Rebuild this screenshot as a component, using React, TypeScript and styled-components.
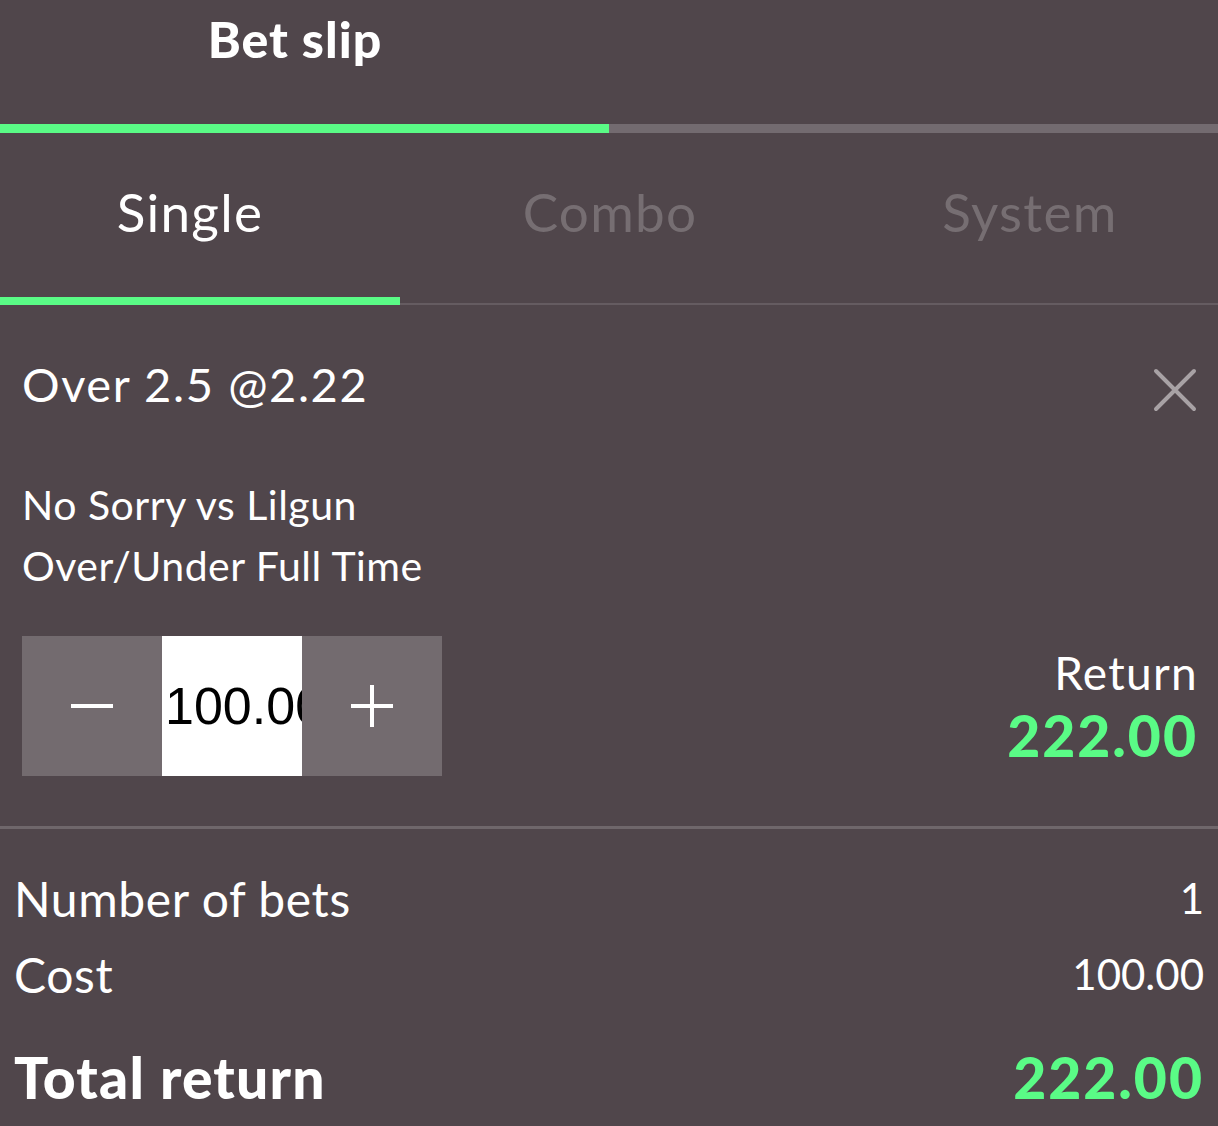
import React from 'react';
import styled, { createGlobalStyle } from 'styled-components';

const GlobalStyle = createGlobalStyle`
  html, body {
    margin: 0;
    padding: 0;
    background: #50464b;
  }
  body {
    font-family: Lato, "Open Sans", sans-serif;
    color: #ffffff;
  }
`;

const Page = styled.div`
  width: 1218px;
  height: 1126px;
  overflow: hidden;
  background: #50464b;
`;

const Header = styled.div`
  height: 124px;
  display: flex;
`;

const HeaderTitle = styled.div`
  width: 590px;
  text-align: center;
  font-weight: 900;
  font-size: 50px;
  line-height: 1;
  padding-top: 14px;
  letter-spacing: 1px;
`;

const Track = styled.div`
  height: 9px;
  background: #736b70;
`;

const TrackFill = styled.div`
  height: 100%;
  background: #5afb86;
`;

const TabsBar = styled.div`
  height: 172px;
  border-bottom: 2px solid #655c61;
  box-sizing: border-box;
`;

const Tabs = styled.div`
  display: grid;
  grid-template-columns: repeat(3, 420px);
  height: 100%;
  margin-left: -20px;
`;

const Tab = styled.div<{ $active?: boolean }>`
  display: flex;
  align-items: center;
  justify-content: center;
  padding-bottom: 14px;
  font-size: 53px;
  letter-spacing: 1.3px;
  color: ${({ $active }) => ($active ? '#ffffff' : '#766e72')};
  position: relative;
  &::after {
    content: '';
    display: ${({ $active }) => ($active ? 'block' : 'none')};
    position: absolute;
    left: 0;
    right: 0;
    bottom: -2px;
    height: 8px;
    background: #5afb86;
  }
`;

const Bet = styled.div`
  padding: 49px 20px 50px 22px;
  border-bottom: 3px solid #6f676b;
`;

const BetHead = styled.div`
  display: flex;
  justify-content: space-between;
  align-items: flex-start;
  height: 60px;
`;

const Selection = styled.div`
  font-size: 47px;
  line-height: 60px;
  letter-spacing: 1.6px;
`;

const Close = styled.button`
  border: none;
  background: none;
  padding: 0;
  width: 46px;
  height: 46px;
  margin-top: 13px;
  cursor: pointer;
`;

const Meta = styled.div`
  margin-top: 60px;
  font-size: 41px;
  line-height: 61px;
  letter-spacing: 0.5px;
`;

const StakeRow = styled.div`
  margin-top: 40px;
  display: flex;
  justify-content: space-between;
  align-items: flex-start;
`;

const Stepper = styled.div`
  display: flex;
  height: 140px;
`;

const StepButton = styled.button`
  width: 140px;
  height: 140px;
  border: none;
  padding: 0;
  background: #736b6f;
  display: flex;
  align-items: center;
  justify-content: center;
  cursor: pointer;
`;

const StakeInput = styled.input`
  width: 140px;
  height: 140px;
  box-sizing: border-box;
  border: none;
  outline: none;
  padding: 0 0 0 3px;
  background: #ffffff;
  color: #000000;
  font-family: "Liberation Sans", Arial, sans-serif;
  font-size: 52px;
`;

const ReturnBox = styled.div`
  text-align: right;
  padding-top: 10px;
`;

const ReturnLabel = styled.div`
  font-size: 46px;
  line-height: 54px;
  letter-spacing: 1.3px;
  margin-bottom: 4px;
`;

const Amount = styled.div<{ $size: number }>`
  color: #5afb86;
  font-weight: 900;
  font-size: ${({ $size }) => $size}px;
  line-height: 1.1;
  letter-spacing: 2px;
`;

const Summary = styled.div`
  padding: 31px 14px 0 14px;
`;

const Line = styled.div<{ $strong?: boolean }>`
  display: flex;
  justify-content: space-between;
  align-items: center;
  height: ${({ $strong }) => ($strong ? '130px' : '76px')};
  font-size: ${({ $strong }) => ($strong ? '57px' : '48px')};
  font-weight: ${({ $strong }) => ($strong ? 900 : 400)};
  letter-spacing: ${({ $strong }) => ($strong ? '1.2px' : '0.6px')};
`;

const Value = styled.span`
  font-size: 42px;
  letter-spacing: 0;
`;

const CloseIcon = () => (
  <svg width="46" height="46" viewBox="0 0 46 46">
    <path d="M4 4 L42 42 M42 4 L4 42" stroke="#a8a2a5" strokeWidth="4" strokeLinecap="round" />
  </svg>
);

const MinusIcon = () => (
  <svg width="44" height="44" viewBox="0 0 44 44">
    <rect x="1" y="20" width="42" height="4" fill="#ffffff" />
  </svg>
);

const PlusIcon = () => (
  <svg width="44" height="44" viewBox="0 0 44 44">
    <rect x="1" y="20" width="42" height="4" fill="#ffffff" />
    <rect x="20" y="1" width="4" height="42" fill="#ffffff" />
  </svg>
);

const App = () => {
  const tabs = ['Single', 'Combo', 'System'];
  return (
    <Page>
      <GlobalStyle />
      <Header>
        <HeaderTitle>Bet slip</HeaderTitle>
      </Header>
      <Track>
        <TrackFill style={{ width: '50%' }} />
      </Track>
      <TabsBar>
        <Tabs>
          {tabs.map((t, i) => (
            <Tab key={t} $active={i === 0}>
              {t}
            </Tab>
          ))}
        </Tabs>
      </TabsBar>
      <Bet>
        <BetHead>
          <Selection>Over 2.5 @2.22</Selection>
          <Close aria-label="remove">
            <CloseIcon />
          </Close>
        </BetHead>
        <Meta>
          No Sorry vs Lilgun
          <br />
          Over/Under Full Time
        </Meta>
        <StakeRow>
          <Stepper>
            <StepButton aria-label="decrease">
              <MinusIcon />
            </StepButton>
            <StakeInput defaultValue="100.00" />
            <StepButton aria-label="increase">
              <PlusIcon />
            </StepButton>
          </Stepper>
          <ReturnBox>
            <ReturnLabel>Return</ReturnLabel>
            <Amount $size={57}>222.00</Amount>
          </ReturnBox>
        </StakeRow>
      </Bet>
      <Summary>
        <Line>
          Number of bets
          <Value>1</Value>
        </Line>
        <Line>
          Cost
          <Value>100.00</Value>
        </Line>
        <Line $strong>
          Total return
          <Amount $size={57}>222.00</Amount>
        </Line>
      </Summary>
    </Page>
  );
};

export default App;
